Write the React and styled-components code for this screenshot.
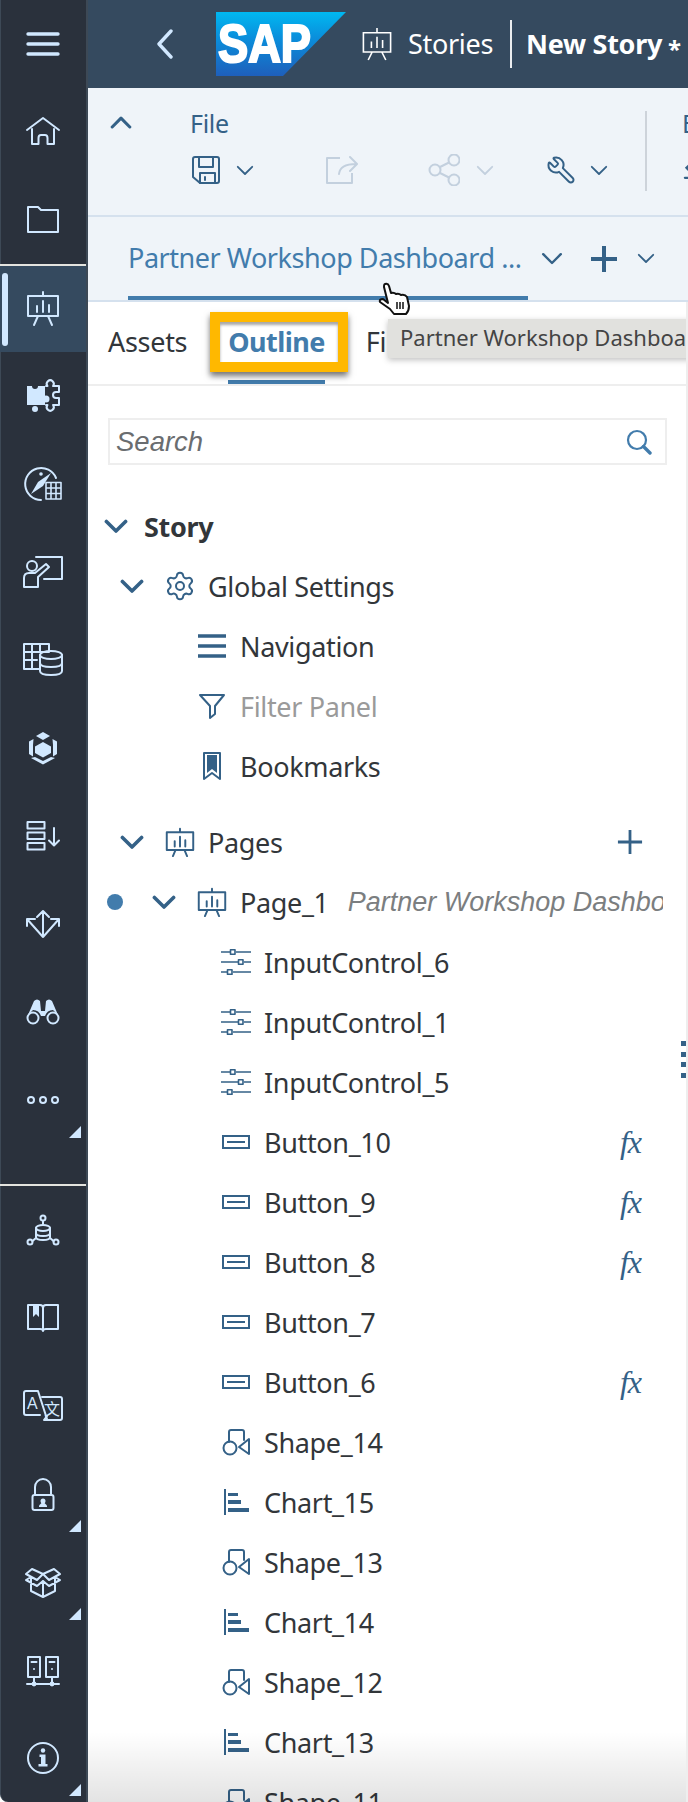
import React from 'react';
import styled, { createGlobalStyle } from 'styled-components';
import { Settings, Wrench } from 'lucide-react';

const Colors = {
  rail: '#2a313c',
  shell: '#354a5f',
  railIcon: '#d1e8ff',
  bar: '#eff4f9',
  barLine: '#d5e1ee',
  blue: '#346187',
  accent: '#427cac',
  text: '#32363a',
  muted: '#c3d0de',
};

const FONT = '"Noto Sans", "Open Sans", Arial, sans-serif';

const Global = createGlobalStyle`
  html, body { margin: 0; padding: 0; background: #fff; }
  #root { width: 688px; height: 1802px; overflow: hidden; }
  * { box-sizing: border-box; }
`;

const Page = styled.div`
  display: flex;
  width: 688px;
  height: 1802px;
  overflow: hidden;
  font-family: ${FONT};
  color: ${Colors.text};
`;

/* ---------- left rail ---------- */

const Rail = styled.nav`
  display: flex;
  flex-direction: column;
  flex: 0 0 88px;
  height: 100%;
  background: ${Colors.rail};
  border-left: 1px solid #3d4956;
  border-right: 2px solid #3d4956;
  border-bottom-left-radius: 8px;
  color: ${Colors.railIcon};
`;

const RailItem = styled.div`
  position: relative;
  display: flex;
  align-items: center;
  justify-content: center;
  flex: 0 0 ${(p) => (p.$active ? '86px' : '88px')};
  margin-left: -1px;
  background: ${(p) => (p.$active ? Colors.shell : 'transparent')};
`;

const ActiveMark = styled.span`
  position: absolute;
  left: 2px;
  top: 7px;
  bottom: 6px;
  width: 6px;
  border-radius: 3px;
  background: ${Colors.railIcon};
`;

const MoreMark = styled.span`
  position: absolute;
  right: 5px;
  bottom: 6px;
  width: 12px;
  height: 12px;
  background: ${Colors.railIcon};
  clip-path: polygon(100% 0, 100% 100%, 0 100%);
`;

const RailLine = styled.div`
  flex: 0 0 2px;
  margin-left: -1px;
  background: #e4e4df;
`;

const RailSpacer = styled.div`
  flex: 1;
`;

const RailGlyph = styled.svg`
  width: 40px;
  height: 40px;
  fill: none;
  stroke: currentColor;
  stroke-width: 2;
  stroke-linejoin: round;
  stroke-linecap: round;
  text { stroke: none; fill: currentColor; }
  .solid { fill: currentColor; stroke: none; }
  .cut { fill: ${Colors.rail}; stroke: none; }
`;

const Hamburger = () => (
  <RailGlyph viewBox="0 0 40 40">
    <path d="M5 10H35M5 20H35M5 30H35" strokeWidth="3.4" />
  </RailGlyph>
);
const Home = () => (
  <RailGlyph viewBox="0 0 40 40">
    <path d="M4 18L20 6L36 18" />
    <path d="M9 17V32H15.500V26Q15.500 23 18 23H22Q24.500 23 24.500 26V32H31V17" />
  </RailGlyph>
);
const Folder = () => (
  <RailGlyph viewBox="0 0 40 40">
    <path d="M5 7H15L18 10H35V32H5Z" />
  </RailGlyph>
);
const Board = () => (
  <RailGlyph viewBox="0 0 40 40">
    <path d="M5 7H35V27H5ZM20 3V7M15 27L11 36M25 27L29 36M14 23V17M20 23V12M26 23V16" />
  </RailGlyph>
);
const Puzzle = () => (
  <RailGlyph viewBox="0 0 40 40">
    <rect className="solid" x="4" y="10" width="18" height="19" />
    <circle className="solid" cx="12" cy="33" r="3" />
    <circle className="solid" cx="23" cy="23" r="3.500" />
    <circle className="cut" cx="12" cy="10" r="3" />
    <path d="M23 10H24.500A3.500 3.500 0 1 1 30 10H36V16H33A3 3 0 0 0 33 22H36V29H30A3.500 3.500 0 1 1 24.500 29H23" />
  </RailGlyph>
);
const Compass = () => (
  <RailGlyph viewBox="0 0 40 40">
    <path d="M18 36A16 16 0 1 1 33 14" />
    <path className="solid" d="M28 9L20 22L8 30L15 18Z" />
    <circle className="solid" cx="18" cy="10" r="1.800" />
    <path strokeWidth="1.600" d="M23 18.500H38V35H23ZM23 24H38M23 29.500H38M28 18.500V35M33 18.500V35" />
  </RailGlyph>
);
const Presenter = () => (
  <RailGlyph viewBox="0 0 40 40">
    <path d="M13 5H39V27H21" />
    <circle cx="9" cy="14" r="5" />
    <path d="M1 35V26Q1 21 6 21H12L23 12L26 15L15 25V35Z" />
  </RailGlyph>
);
const TableData = () => (
  <RailGlyph viewBox="0 0 40 40">
    <path d="M16 29H1V4H26V12M1 12H26M1 20H14M9 4V29M17 4V12" />
    <ellipse cx="28" cy="15" rx="11" ry="4" />
    <path d="M17 15V31Q17 35 28 35Q39 35 39 31V15M17 23Q17 27 28 27Q39 27 39 23" />
  </RailGlyph>
);
const Cube = () => (
  <RailGlyph viewBox="0 0 40 40">
    <path className="solid" d="M20 4L27 8L20 12L13 8Z" />
    <path className="solid" d="M20 14L28 18.500V25L20 29.500L12 25V18.500Z" />
    <path className="solid" d="M10.500 11L6 13.500V26L10 28.500V17Z" />
    <path className="solid" d="M29.500 11L34 13.500V26L30 28.500V17Z" />
    <path className="solid" d="M12 29L20 33L28 29L32 30L20 36.500L8 30Z" />
  </RailGlyph>
);
const SortRows = () => (
  <RailGlyph viewBox="0 0 40 40">
    <rect x="4.500" y="6" width="17" height="6.500" />
    <rect x="4.500" y="16.500" width="17" height="6.500" />
    <rect x="4.500" y="27" width="17" height="6.500" />
    <path d="M31 12V29M26 24.500L31 29.500L36 24.500" />
  </RailGlyph>
);
const Spread = () => (
  <RailGlyph viewBox="0 0 40 40">
    <path d="M20 33V7M14 13L20 7L26 13M20 33L4 15M4 22V15H12M20 33L36 15M36 22V15H28" />
  </RailGlyph>
);
const Binoculars = () => (
  <RailGlyph viewBox="0 0 40 40">
    <path className="solid" d="M5 23L11 9Q14 6 17 9L18 19H22L23 9Q26 6 29 9L35 23L30 18Q24 18 22 24H18Q16 18 10 18Z" />
    <circle cx="10" cy="26" r="5.500" />
    <circle cx="30" cy="26" r="5.500" />
  </RailGlyph>
);
const Dots = () => (
  <RailGlyph viewBox="0 0 40 40">
    <circle cx="8" cy="20" r="3" />
    <circle cx="20" cy="20" r="3" />
    <circle cx="32" cy="20" r="3" />
  </RailGlyph>
);
const DataNet = () => (
  <RailGlyph viewBox="0 0 40 40">
    <circle cx="20" cy="8" r="2.500" />
    <path d="M20 11V15" />
    <ellipse cx="20" cy="18" rx="7" ry="3" />
    <path d="M13 18V27Q13 30 20 30Q27 30 27 27V18M13 23Q13 26 20 26Q27 26 27 23" />
    <circle cx="7" cy="32" r="2.500" />
    <circle cx="33" cy="32" r="2.500" />
    <path d="M9.500 31L13 28M30.500 31L27 28" />
  </RailGlyph>
);
const BookIcon = () => (
  <RailGlyph viewBox="0 0 40 40">
    <path d="M20 10Q20 7 17 7H5V31H17Q20 31 20 33Q20 31 23 31H35V7H23Q20 7 20 10V33" />
    <path className="solid" d="M10 7H16V19L13 16L10 19Z" />
  </RailGlyph>
);
const Translate = () => (
  <RailGlyph viewBox="0 0 40 40">
    <path d="M17 29H3Q1 29 1 27V7Q1 5 3 5H15L24 33" />
    <path d="M19 11H37Q39 11 39 13V32Q39 34 37 34H21L24 30" />
    <text x="4" y="23" fontSize="16" fontFamily="Liberation Sans, sans-serif">A</text>
    <text x="21" y="29" fontSize="16" fontFamily="Noto Sans CJK SC, sans-serif">文</text>
  </RailGlyph>
);
const Lock = () => (
  <RailGlyph viewBox="0 0 40 40">
    <path d="M12 21V13A8 8 0 0 1 28 13V21" />
    <rect x="9.500" y="21" width="21" height="15" rx="2" />
    <circle className="solid" cx="20" cy="27" r="2.500" />
    <path className="solid" d="M16 33V31.500L18.500 29H21.500L24 31.500V33Z" />
  </RailGlyph>
);
const OpenBox = () => (
  <RailGlyph viewBox="0 0 40 40">
    <path d="M20 12L9 7L3 12L14 18L20 12L31 7L37 12L26 18L20 12M8 16V29L20 35L32 29V16M20 35V19L14 24L3 18L8 15M20 19L26 24L37 18L32 15" />
  </RailGlyph>
);
const Servers = () => (
  <RailGlyph viewBox="0 0 40 40">
    <rect x="5" y="7" width="12" height="20" />
    <rect x="23" y="7" width="12" height="20" />
    <path d="M8.500 12H13.500M26.500 12H31.500M11 19V19.100M29 19V19.100M11 27V34M29 27V34M4 34H36" />
    <circle className="solid" cx="11" cy="34" r="2.400" />
    <circle className="solid" cx="29" cy="34" r="2.400" />
  </RailGlyph>
);
const Info = () => (
  <RailGlyph viewBox="0 0 40 40">
    <circle cx="20" cy="20" r="15" />
    <circle className="solid" cx="20" cy="12.500" r="2.200" />
    <path className="solid" d="M16.500 16.500H22.500V26H24.500V28.500H15.500V26H18V19H16.500Z" />
  </RailGlyph>
);

const topItems = [Hamburger, Home, Folder];
const midItems = [Puzzle, Compass, Presenter, TableData, Cube, SortRows, Spread, Binoculars];
const lowItems = [
  { Icon: DataNet },
  { Icon: BookIcon },
  { Icon: Translate },
  { Icon: Lock, more: true },
  { Icon: OpenBox, more: true },
  { Icon: Servers },
  { Icon: Info, more: true },
];

const SideRail = () => (
  <Rail>
    {topItems.map((Icon, i) => (
      <RailItem key={i}><Icon /></RailItem>
    ))}
    <RailLine />
    <RailItem $active><ActiveMark /><Board /></RailItem>
    {midItems.map((Icon, i) => (
      <RailItem key={i}><Icon /></RailItem>
    ))}
    <RailItem><Dots /><MoreMark /></RailItem>
    <RailSpacer />
    <RailLine />
    {lowItems.map(({ Icon, more }, i) => (
      <RailItem key={i}>
        <Icon />
        {more && <MoreMark />}
      </RailItem>
    ))}
  </Rail>
);

/* ---------- shell header ---------- */

const Main = styled.main`
  position: relative;
  display: flex;
  flex-direction: column;
  flex: 1;
  min-width: 0;
  height: 100%;
  overflow: hidden;
`;

const Header = styled.header`
  display: flex;
  align-items: center;
  flex: 0 0 88px;
  padding-left: 68px;
  background: ${Colors.shell};
  color: #fff;
  white-space: nowrap;
`;

const BackIcon = styled.svg`
  width: 18px;
  height: 30px;
  fill: none;
  stroke: ${Colors.railIcon};
  stroke-width: 3.4;
  stroke-linecap: round;
  stroke-linejoin: round;
`;

const LogoBox = styled.svg`
  flex: none;
  width: 130px;
  height: 64px;
  margin-left: 42px;
`;

const StoryIcon = styled.svg`
  flex: none;
  width: 32px;
  height: 36px;
  margin-left: 15px;
  fill: none;
  stroke: currentColor;
  stroke-width: 2;
`;

const Crumb = styled.span`
  margin: 0 0 2px ${(p) => (p.$strong ? 14 : 15)}px;
  font-size: 27px;
  letter-spacing: -0.3px;
  font-weight: ${(p) => (p.$strong ? 700 : 400)};
`;

const CrumbLine = styled.span`
  flex: none;
  width: 2px;
  height: 48px;
  margin-left: 17px;
  background: #fff;
  opacity: 0.9;
`;

const Star = styled.span`
  margin: 8px 0 0 6px;
  font-size: 24px;
  font-weight: 700;
`;

const ShellBar = () => (
  <Header>
    <BackIcon viewBox="0 0 18 30">
      <path d="M15 2L3 15L15 28" />
    </BackIcon>
    <LogoBox viewBox="0 0 130 64">
      <defs>
        <linearGradient id="sapBlue" x1="0" y1="0" x2="0" y2="1">
          <stop offset="0" stopColor="#00b8f1" />
          <stop offset="0.4" stopColor="#0a8fdc" />
          <stop offset="1" stopColor="#1e5fbb" />
        </linearGradient>
      </defs>
      <path d="M0 0H130L67 64H0Z" fill="url(#sapBlue)" />
      <text x="2" y="50" fill="#fff" stroke="#fff" strokeWidth="2.200" fontSize="54" fontWeight="700" fontFamily="Liberation Sans, sans-serif" textLength="93" lengthAdjust="spacingAndGlyphs">SAP</text>
    </LogoBox>
    <StoryIcon viewBox="0 0 40 44">
      <path d="M3 8H37V32H3ZM20 2V8M14 32L9 42M26 32L31 42M13 27V19M20 27V13M27 27V17" />
    </StoryIcon>
    <Crumb>Stories</Crumb>
    <CrumbLine />
    <Crumb $strong>New Story</Crumb>
    <Star>*</Star>
  </Header>
);

/* ---------- toolbar ---------- */

const Toolbar = styled.section`
  display: flex;
  flex: 0 0 129px;
  background: ${Colors.bar};
  border-bottom: 2px solid ${Colors.barLine};
  color: ${Colors.blue};
`;

const Collapse = styled.div`
  flex: 0 0 102px;
  padding: 24px 0 0 22px;
`;

const ToolGroup = styled.div`
  flex: 0 0 ${(p) => p.$width}px;
  padding-top: 17px;
`;

const GroupTitle = styled.div`
  height: 36px;
  line-height: 36px;
  font-size: 25px;
  letter-spacing: -0.3px;
`;

const ToolRow = styled.div`
  display: flex;
  align-items: center;
  height: 30px;
  margin-top: 14px;
`;

const ToolButton = styled.div`
  display: flex;
  flex: 0 0 ${(p) => p.$width}px;
  align-items: center;
  gap: ${(p) => p.$gap || 16}px;
  padding-left: 2px;
  color: ${(p) => (p.$off ? Colors.muted : Colors.blue)};
`;

const GroupLine = styled.span`
  flex: 0 0 2px;
  height: 80px;
  margin: 23px 35px 0 0;
  background: #cdd3da;
`;

const Glyph = styled.svg`
  flex: none;
  width: ${(p) => p.$w}px;
  height: ${(p) => p.$h || p.$w}px;
  fill: none;
  stroke: currentColor;
  stroke-width: ${(p) => p.$sw || 2}px;
  stroke-linejoin: round;
  stroke-linecap: round;
  .solid { fill: currentColor; stroke: none; }
`;

const MirrorWrench = styled(Wrench)`
  flex: none;
  transform: scaleX(-1);
`;

const Chevron = ({ w = 18, sw = 2, up }) => (
  <Glyph $w={w} $h={w * 0.6} $sw={sw} viewBox="0 0 20 12">
    <path d={up ? 'M2 10L10 2L18 10' : 'M2 2L10 10L18 2'} />
  </Glyph>
);

const Plus = ({ size, sw }) => (
  <Glyph $w={size} $sw={sw} viewBox="0 0 28 28">
    <path d="M1 14H27M14 1V27" strokeLinecap="butt" />
  </Glyph>
);

const ToolBar = () => (
  <Toolbar>
    <Collapse>
      <Chevron w={22} sw={2.800} up />
    </Collapse>
    <ToolGroup $width={455}>
      <GroupTitle>File</GroupTitle>
      <ToolRow>
        <ToolButton $width={134}>
          <Glyph $w={28} viewBox="0 0 28 28">
            <path d="M3 1H25Q27 1 27 3V25Q27 27 25 27H8L1 21V3Q1 1 3 1Z" />
            <path d="M7 1V11H21V1M8 27V17H23V27M13 21V24" />
          </Glyph>
          <Chevron />
        </ToolButton>
        <ToolButton $width={102} $off>
          <Glyph $w={32} viewBox="0 0 32 28">
            <path d="M14 2H1V27H26V17" strokeLinecap="butt" />
            <path d="M13 18Q14 8 30 8M24 1L31 8L24 15" />
          </Glyph>
        </ToolButton>
        <ToolButton $width={118} $off>
          <Glyph $w={32} viewBox="0 0 32 32">
            <circle cx="7" cy="16" r="5.500" />
            <circle cx="26" cy="6" r="5.500" />
            <circle cx="26" cy="26" r="5.500" />
            <path d="M12 13L21 8.500M12 19L21 23.500" />
          </Glyph>
          <Chevron />
        </ToolButton>
        <ToolButton $width={100} $gap={14}>
          <MirrorWrench size={30} strokeWidth={1.600} />
          <Chevron />
        </ToolButton>
      </ToolRow>
    </ToolGroup>
    <GroupLine />
    <ToolGroup $width={40}>
      <GroupTitle>Edit</GroupTitle>
      <ToolRow>
        <Glyph $w={20} viewBox="0 0 20 28">
          <path className="solid" d="M0 11L11 0L20 9L9 20Z" />
          <path d="M0 25H20" strokeWidth="3" />
        </Glyph>
      </ToolRow>
    </ToolGroup>
  </Toolbar>
);

/* ---------- page tab strip ---------- */

const TabStrip = styled.section`
  display: flex;
  align-items: center;
  flex: 0 0 85px;
  padding-left: 40px;
  background: ${Colors.bar};
  border-bottom: 2px solid ${Colors.barLine};
  color: ${Colors.blue};
`;

const PageTab = styled.div`
  flex: 0 0 400px;
  height: 83px;
  padding-top: 22px;
  border-bottom: 4px solid ${Colors.accent};
  color: ${Colors.accent};
  font-size: 27px;
  letter-spacing: -0.45px;
  line-height: 38px;
  white-space: nowrap;
`;

const StripIcons = styled.div`
  display: flex;
  align-items: center;
  gap: 19px;
  padding: 0 0 0 13px;
`;

const StripPlus = styled.span`
  display: flex;
  margin-left: 8px;
`;

const PageStrip = () => (
  <TabStrip>
    <PageTab>Partner Workshop Dashboard ...</PageTab>
    <StripIcons>
      <Chevron w={22} sw={2.200} />
      <StripPlus><Plus size={28} sw={4} /></StripPlus>
      <Chevron w={18} />
    </StripIcons>
  </TabStrip>
);

/* ---------- outline panel ---------- */

const Panel = styled.section`
  position: relative;
  flex: 1;
  min-height: 0;
  overflow: hidden;
  background: #fff;
  border-right: 2px solid #eeeeee;
`;

const PanelTabs = styled.div`
  display: flex;
  gap: 41px;
  height: 84px;
  padding-left: 20px;
  border-bottom: 2px solid #eeeeee;
`;

const PanelTab = styled.div`
  height: 82px;
  padding-top: 20px;
  font-size: 27px;
  letter-spacing: ${(p) => (p.$active ? '-0.55px' : '-0.3px')};
  line-height: 40px;
  font-weight: ${(p) => (p.$active ? 700 : 400)};
  color: ${(p) => (p.$active ? Colors.accent : Colors.text)};
  border-bottom: 4px solid ${(p) => (p.$active ? Colors.accent : 'transparent')};
`;

const Callout = styled.div`
  position: absolute;
  left: 122px;
  top: 10px;
  width: 138px;
  height: 60px;
  border: 10px solid #ffb800;
  box-shadow: 0 4px 6px rgba(0, 0, 0, 0.55), inset 0 3px 3px rgba(0, 0, 0, 0.35);
`;

const Tip = styled.div`
  position: absolute;
  left: 300px;
  top: 17px;
  width: 320px;
  height: 39px;
  padding-left: 12px;
  background: #e1e1de;
  color: #444;
  font-size: 22px;
  line-height: 37px;
  white-space: nowrap;
  box-shadow: 0 2px 6px rgba(0, 0, 0, 0.25);
`;

const HandCursor = styled.svg`
  position: absolute;
  left: 290px;
  top: 282px;
  width: 34px;
  height: 34px;
  fill: #fff;
  stroke: #111;
  stroke-width: 2;
  stroke-linejoin: round;
`;

const SearchBox = styled.div`
  display: flex;
  align-items: center;
  justify-content: space-between;
  height: 47px;
  margin: 32px 19px 31px 20px;
  padding: 0 13px 0 6px;
  border: 2px solid #eeeeee;
  color: #6a6d70;
  font-family: "Liberation Sans", Arial, sans-serif;
  font-size: 27.500px;
  font-style: italic;
`;

const SearchMark = styled.span`
  color: ${Colors.accent};
  display: flex;
`;

const Row = styled.div`
  display: flex;
  align-items: center;
  height: 60px;
  margin-top: ${(p) => p.$gap || 0}px;
  padding: 0 ${(p) => p.$end || 43}px 0 ${(p) => p.$indent}px;
  font-size: 27px;
  letter-spacing: -0.35px;
  white-space: nowrap;
  color: ${Colors.text};
`;

const ChevSlot = styled.span`
  display: flex;
  flex: 0 0 24px;
  justify-content: center;
  color: ${Colors.blue};
`;

const IconSlot = styled.span`
  display: flex;
  flex: 0 0 ${(p) => p.$w}px;
  width: ${(p) => p.$w}px;
  min-width: 0;
  justify-content: center;
  margin-left: ${(p) => p.$left || 0}px;
  color: ${Colors.blue};
  svg { flex: none; }
`;

const Label = styled.span`
  margin-left: ${(p) => p.$left}px;
  font-weight: ${(p) => (p.$strong ? 700 : 400)};
  color: ${(p) => (p.$dim ? '#9a9a9a' : Colors.text)};
`;

const Subtitle = styled.span`
  flex: 1;
  min-width: 0;
  margin-left: 19px;
  overflow: hidden;
  font-family: "Liberation Sans", Arial, sans-serif;
  font-style: italic;
  letter-spacing: 0;
  color: #7b7e80;
`;

const Trailing = styled.span`
  display: flex;
  margin-left: auto;
  color: ${Colors.blue};
`;

const Fx = styled.span`
  margin-right: 2px;
  font-family: "Liberation Serif", serif;
  font-style: italic;
  font-size: 32px;
  line-height: 30px;
  letter-spacing: -1px;
  color: ${Colors.blue};
`;

const Dot = styled.span`
  flex: 0 0 16px;
  height: 16px;
  margin-right: 29px;
  border-radius: 50%;
  background: ${Colors.accent};
`;

const Fade = styled.div`
  position: absolute;
  left: 0;
  right: 0;
  bottom: 0;
  height: 70px;
  background: linear-gradient(rgba(0, 0, 0, 0), rgba(0, 0, 0, 0.11));
`;

const Handle = styled.div`
  position: absolute;
  right: 0;
  top: 739px;
  display: flex;
  flex-direction: column;
  gap: 5.500px;
`;

const HandleDot = styled.span`
  width: 5px;
  height: 5px;
  background: ${Colors.blue};
`;

const Chev = () => <ChevSlot><Chevron w={24} sw={3} /></ChevSlot>;

const PageIcon = () => (
  <Glyph $w={30} $sw={2.200} viewBox="3 0 34 34">
    <path d="M5 6H35V26H5ZM20 2V6M15 26L12 33M25 26L28 33M14 22V16M20 22V11M26 22V15" />
  </Glyph>
);

const MenuIcon = () => (
  <Glyph $w={28} $sw={3.500} viewBox="0 0 28 24">
    <path d="M0 2H28M0 12H28M0 22H28" strokeLinecap="butt" />
  </Glyph>
);

const FunnelIcon = () => (
  <Glyph $w={26} viewBox="0 0 26 26">
    <path d="M1 2H25L16 13V21L11 25V13Z" />
  </Glyph>
);

const MarkIcon = () => (
  <Glyph $w={20} $h={28} viewBox="0 0 20 28">
    <path d="M2 1H18V27L10 21L2 27Z" />
    <path className="solid" d="M5 3H15V21L10 17L5 21Z" />
  </Glyph>
);

const SliderIcon = () => (
  <Glyph $w={30} $h={26} $sw={1.600} viewBox="0 0 30 26">
    <g strokeLinecap="butt">
      <path d="M0 3H9M15 3H30M0 13H17M23 13H30M0 23H6M12 23H30" />
      <rect x="9.500" y="0.800" width="4.500" height="4.500" />
      <rect x="17.500" y="10.800" width="4.500" height="4.500" />
      <rect x="6.500" y="20.800" width="4.500" height="4.500" />
    </g>
  </Glyph>
);

const ButtonIcon = () => (
  <Glyph $w={28} $h={14} viewBox="0 0 28 14">
    <path d="M1 1H27V13H1ZM5 7H23" strokeLinejoin="miter" strokeLinecap="butt" />
  </Glyph>
);

const ShapeIcon = () => (
  <Glyph $w={28} viewBox="0 0 28 28">
    <path d="M7 14V4Q7 2 9 2H20Q22 2 22 4V12" />
    <circle cx="8" cy="20" r="6.500" />
    <path d="M27 11V26L17 19Z" />
  </Glyph>
);

const ChartIcon = () => (
  <Glyph $w={26} viewBox="0 0 26 26">
    <path d="M2 0V26" strokeLinecap="butt" />
    <path className="solid" d="M5 4H15V7H5ZM5 11H18V15H5ZM5 19H26V23H5Z" />
  </Glyph>
);

const outlineItems = [
  { name: 'InputControl_6', Icon: SliderIcon },
  { name: 'InputControl_1', Icon: SliderIcon },
  { name: 'InputControl_5', Icon: SliderIcon },
  { name: 'Button_10', Icon: ButtonIcon, fx: true },
  { name: 'Button_9', Icon: ButtonIcon, fx: true },
  { name: 'Button_8', Icon: ButtonIcon, fx: true },
  { name: 'Button_7', Icon: ButtonIcon },
  { name: 'Button_6', Icon: ButtonIcon, fx: true },
  { name: 'Shape_14', Icon: ShapeIcon },
  { name: 'Chart_15', Icon: ChartIcon },
  { name: 'Shape_13', Icon: ShapeIcon },
  { name: 'Chart_14', Icon: ChartIcon },
  { name: 'Shape_12', Icon: ShapeIcon },
  { name: 'Chart_13', Icon: ChartIcon },
  { name: 'Shape_11', Icon: ShapeIcon },
];

const settingsItems = [
  { name: 'Navigation', Icon: MenuIcon },
  { name: 'Filter Panel', Icon: FunnelIcon, dim: true },
  { name: 'Bookmarks', Icon: MarkIcon },
];

const OutlinePanel = () => (
  <Panel>
    <PanelTabs>
      <PanelTab>Assets</PanelTab>
      <PanelTab $active>Outline</PanelTab>
      <PanelTab>Filters</PanelTab>
    </PanelTabs>

    <SearchBox>
      Search
      <SearchMark>
        <Glyph $w={26} $sw={2.200} viewBox="0 0 26 26">
          <circle cx="11" cy="11" r="9" />
          <path d="M17.500 17.500L24 24" strokeWidth="3.400" />
        </Glyph>
      </SearchMark>
    </SearchBox>

    <Row $indent={16}>
      <Chev />
      <Label $left={16} $strong>Story</Label>
    </Row>
    <Row $indent={32}>
      <Chev />
      <IconSlot $w={28} $left={22}><Settings size={32} strokeWidth={1.500} /></IconSlot>
      <Label $left={14}>Global Settings</Label>
    </Row>
    {settingsItems.map(({ name, Icon, dim }) => (
      <Row key={name} $indent={110}>
        <IconSlot $w={28}><Icon /></IconSlot>
        <Label $left={14} $dim={dim}>{name}</Label>
      </Row>
    ))}
    <Row $indent={32} $gap={16}>
      <Chev />
      <IconSlot $w={28} $left={22}><PageIcon /></IconSlot>
      <Label $left={14}>Pages</Label>
      <Trailing><Plus size={26} sw={3} /></Trailing>
    </Row>
    <Row $indent={19} $end={23}>
      <Dot />
      <Chev />
      <IconSlot $w={28} $left={22}><PageIcon /></IconSlot>
      <Label $left={14}>Page_1</Label>
      <Subtitle>Partner Workshop Dashboard</Subtitle>
    </Row>
    {outlineItems.map(({ name, Icon, fx }) => (
      <Row key={name} $indent={133}>
        <IconSlot $w={30}><Icon /></IconSlot>
        <Label $left={13}>{name}</Label>
        {fx && <Trailing><Fx>fx</Fx></Trailing>}
      </Row>
    ))}

    <Callout />
    <Tip>Partner Workshop Dashboard Overview</Tip>
    <Handle>
      <HandleDot /><HandleDot /><HandleDot /><HandleDot />
    </Handle>
    <Fade />
  </Panel>
);

export default function App() {
  return (
    <>
      <Global />
      <Page>
        <SideRail />
        <Main>
          <ShellBar />
          <ToolBar />
          <PageStrip />
          <OutlinePanel />
          <HandCursor viewBox="0 0 34 34">
            <path d="M7 2Q10 1 11 4L13 11Q16 10 18 12Q21 11 23 13Q27 12 29 15L31 24Q31 29 28 32H16L12 27L2 20Q1 17 5 17L10 21L6 5Q6 2 7 2Z" />
            <path d="M19 20V27M22 20V27M25 20V27" fill="none" strokeWidth="1.500" />
          </HandCursor>
        </Main>
      </Page>
    </>
  );
}
